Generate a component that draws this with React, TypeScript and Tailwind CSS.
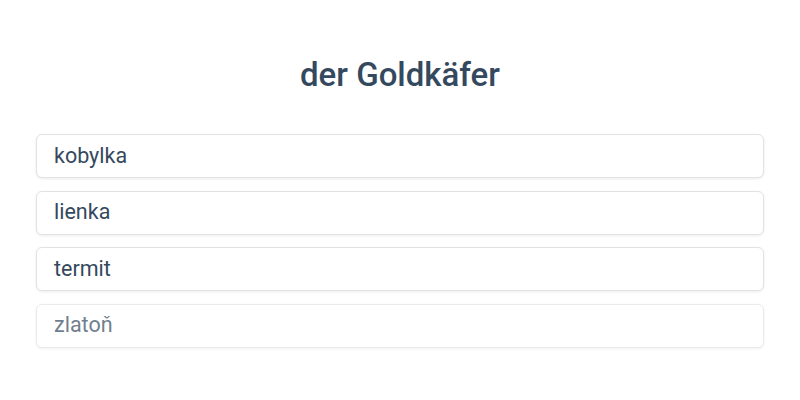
const options = ["kobylka", "lienka", "termit", "zlatoň"];

export default function App() {
  return (
    <div className="w-[800px] h-[400px] bg-white font-['Roboto',sans-serif] text-[#34495e]">
      <div className="pt-[53px] text-center text-[33px] font-medium leading-[44px]">
        der Goldkäfer
      </div>
      <div className="mt-[37px] px-[36px] flex flex-col gap-[12.5px]">
        {options.map((o, i) => (
          <div
            key={o}
            className={
              "h-[44px] flex items-center px-[17px] rounded-[6px] border border-[#e2e2e2] bg-white shadow-[0_1px_3px_rgba(0,0,0,0.08)] text-[21.5px] " +
              (i === 3 ? "opacity-70" : "")
            }
          >
            {o}
          </div>
        ))}
      </div>
    </div>
  );
}
